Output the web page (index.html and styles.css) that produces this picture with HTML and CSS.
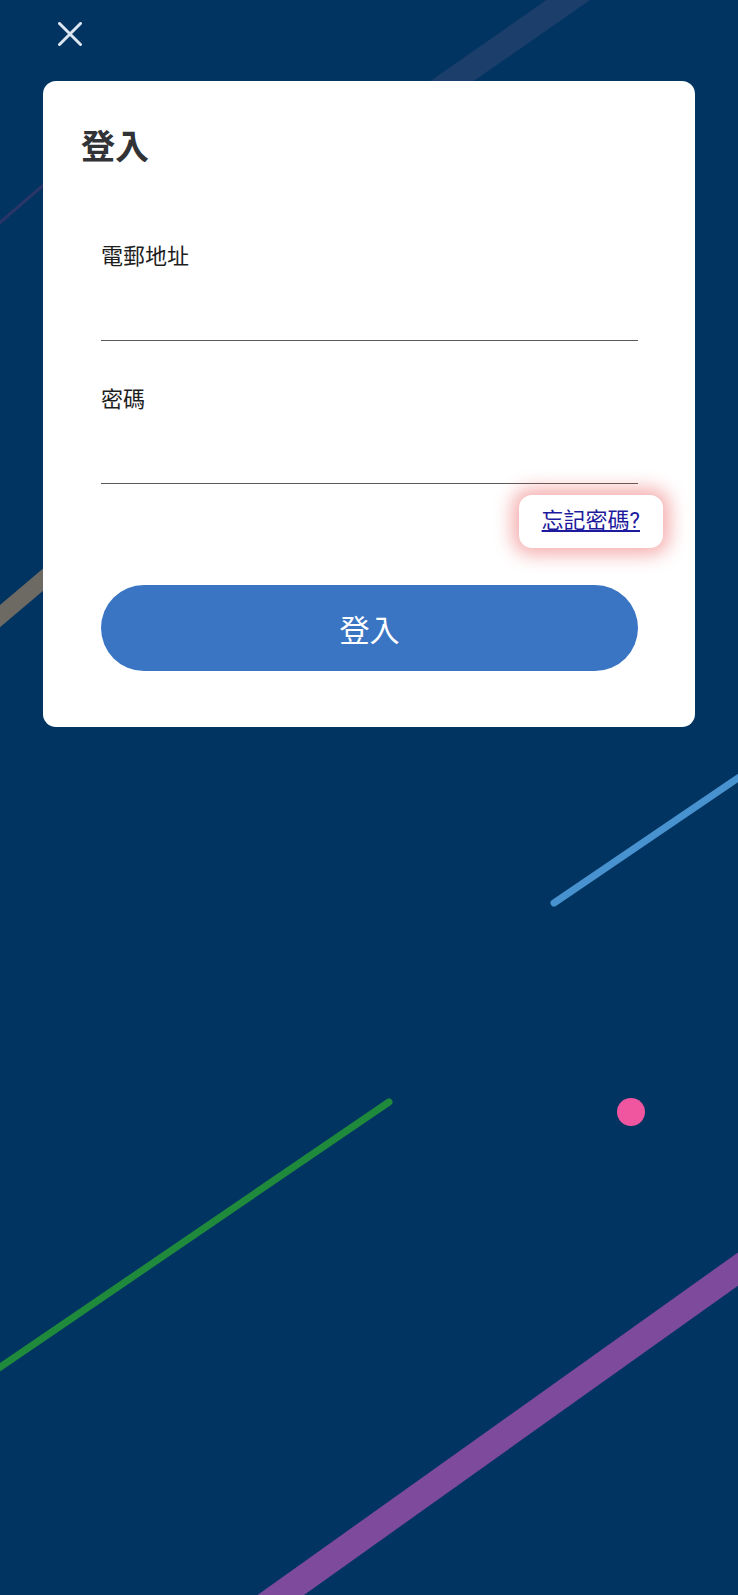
FILE: index.html
```html
<!DOCTYPE html>
<html lang="zh-Hant">
<head>
<meta charset="utf-8">
<title>登入</title>
<link rel="stylesheet" href="styles.css">
</head>
<body>
<svg class="bg" width="738" height="1595" viewBox="0 0 738 1595" aria-hidden="true">
  <line x1="640" y1="-50" x2="300" y2="187" stroke="#1b3e6b" stroke-width="25"/>
  <line x1="-10" y1="231" x2="90" y2="145" stroke="#2a3668" stroke-width="3"/>
  <line x1="-20" y1="633" x2="110" y2="523" stroke="#6d6a64" stroke-width="17"/>
  <line x1="554" y1="903" x2="800" y2="736" stroke="#4893cf" stroke-width="7" stroke-linecap="round"/>
  <line x1="-20" y1="1381" x2="389" y2="1102" stroke="#1f8a3b" stroke-width="7" stroke-linecap="round"/>
  <circle cx="631" cy="1112" r="14" fill="#f0559f"/>
  <line x1="205" y1="1649" x2="790" y2="1232" stroke="#7e4a9c" stroke-width="27"/>
</svg>
<main class="page">
  <header class="topbar">
    <button class="close" type="button" aria-label="關閉">
      <svg width="24" height="24" viewBox="0 0 24 24"><path d="M1.5 1.5 L22.5 22.5 M22.5 1.5 L1.5 22.5" stroke="#dde7f2" stroke-width="3" stroke-linecap="round" fill="none"/></svg>
    </button>
  </header>
  <section class="card">
    <h1 class="title">登入</h1>
    <form class="form">
      <div class="field">
        <label class="label">電郵地址</label>
        <div class="input"></div>
      </div>
      <div class="field">
        <label class="label">密碼</label>
        <div class="input"></div>
      </div>
      <div class="forgot-row"><a class="forgot" href="#">忘記密碼?</a></div>
      <button class="submit" type="button">登入</button>
    </form>
  </section>
</main>
</body>
</html>
```
FILE: styles.css
```css
html, body {
  margin: 0;
  padding: 0;
}
body {
  background: #023462;
  font-family: "Noto Sans CJK TC", "Noto Sans", sans-serif;
  width: 738px;
  height: 1595px;
  overflow: hidden;
  position: relative;
}
.bg {
  position: absolute;
  left: 0;
  top: 0;
  z-index: 0;
}
.page {
  position: relative;
  z-index: 1;
}
.topbar {
  height: 81px;
  box-sizing: border-box;
  padding: 22px 0 0 58px;
}
.close {
  display: block;
  width: 24px;
  height: 24px;
  padding: 0;
  border: 0;
  background: none;
}
.close svg {
  display: block;
}
.card {
  margin: 0 43px;
  background: #fff;
  border-radius: 13px;
  padding: 43px 32px 56px 38px;
}
.title {
  margin: 0;
  font-size: 34px;
  line-height: 42px;
  font-weight: 700;
  color: #313336;
}
.form {
  margin-top: 73px;
  padding-left: 20px;
  display: flex;
  flex-direction: column;
}
.field {
  margin-right: 25px;
  border-bottom: 1px solid #5a5a5a;
}
.field + .field {
  margin-top: 41px;
}
.label {
  display: block;
  font-size: 22px;
  line-height: 30px;
  color: #1e1e1e;
}
.input {
  height: 71px;
}
.forgot-row {
  display: flex;
  justify-content: flex-end;
  margin-top: 11px;
}
.forgot {
  display: block;
  background: #fff;
  border-radius: 13px;
  padding: 13px 23px 14px;
  font-family: Roboto, "Noto Sans CJK TC", sans-serif;
  font-size: 22px;
  line-height: 26px;
  color: #1d1a9e;
  text-decoration: underline;
  box-shadow: 0 0 18px 7px rgba(232, 80, 80, 0.45);
}
.submit {
  margin-top: 37px;
  margin-right: 25px;
  height: 86px;
  border: 0;
  border-radius: 43px;
  background: #3a75c4;
  color: #fff;
  font-family: "Noto Sans CJK TC", sans-serif;
  font-size: 30px;
  line-height: 86px;
  padding: 0;
}
```
